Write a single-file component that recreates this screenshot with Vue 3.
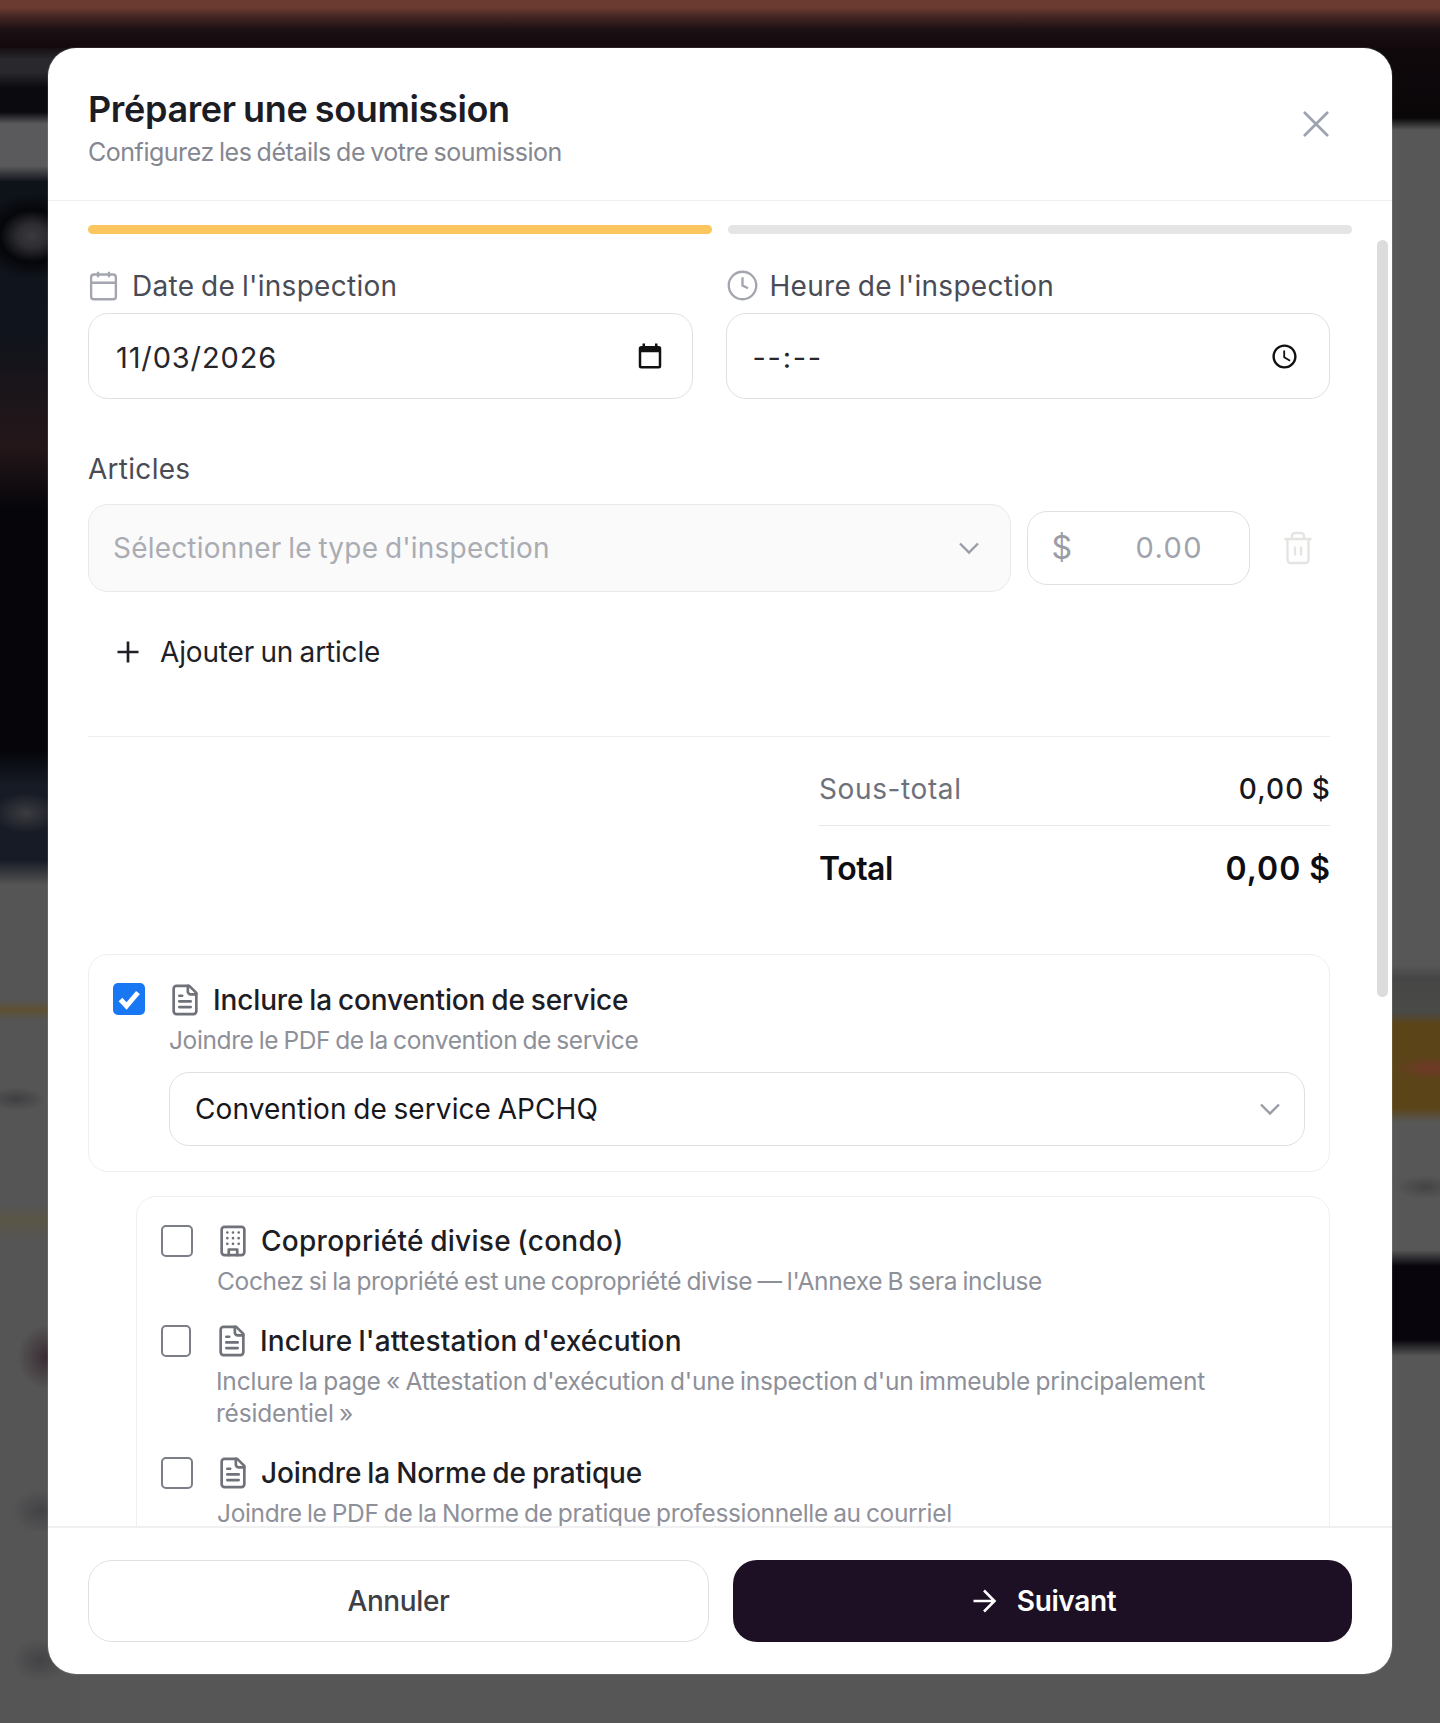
<template>
  <div class="screen">
    <div class="modal">
      <header class="modal-head">
        <div>
          <h2 class="title">Préparer une soumission</h2>
          <p class="subtitle">Configurez les détails de votre soumission</p>
        </div>
        <svg class="close" viewBox="0 0 24 24"><path d="M18 6 6 18M6 6l12 12" /></svg>
      </header>

      <div class="modal-body">
        <div class="scroll-thumb"></div>

        <div class="steps">
          <span class="step active"></span>
          <span class="step"></span>
        </div>

        <div class="content">
          <div class="fields">
            <div>
              <label class="field-label">
                <svg class="label-icon" viewBox="0 0 24 24">
                  <path d="M8 2v4M16 2v4M3 10h18" />
                  <rect x="3" y="4" width="18" height="18" rx="2" />
                </svg>
                Date de l'inspection
              </label>
              <div class="input">
                <span class="date-value">11/03/2026</span>
                <svg class="native-icon cal" viewBox="0 0 24 24">
                  <path d="M19 4h-1V2h-2v2H8V2H6v2H5a2 2 0 0 0-2 2v14a2 2 0 0 0 2 2h14a2 2 0 0 0 2-2V6a2 2 0 0 0-2-2zm0 16H5V9h14v11z" />
                </svg>
              </div>
            </div>
            <div>
              <label class="field-label time">
                <svg class="label-icon" viewBox="0 0 24 24">
                  <circle cx="12" cy="12" r="10" />
                  <path d="M12 6v6l4 2" />
                </svg>
                Heure de l'inspection
              </label>
              <div class="input">
                <span class="time-value">--:--</span>
                <svg class="native-icon clock" viewBox="0 0 24 24">
                  <path d="M11.99 2C6.47 2 2 6.48 2 12s4.47 10 9.99 10C17.52 22 22 17.52 22 12S17.52 2 11.99 2zM12 20c-4.42 0-8-3.58-8-8s3.58-8 8-8 8 3.58 8 8-3.58 8-8 8z" />
                  <path d="M12.5 7H11v6l5.25 3.15.75-1.23-4.5-2.67z" />
                </svg>
              </div>
            </div>
          </div>

          <div class="section-label">Articles</div>
          <div class="article-row">
            <div class="select disabled">
              <span>Sélectionner le type d'inspection</span>
              <svg class="chevron" viewBox="0 0 24 24"><path d="m6 9 6 6 6-6" /></svg>
            </div>
            <div class="price">
              <span class="dollar">$</span>
              <span class="amount">0.00</span>
            </div>
            <svg class="trash" viewBox="0 0 24 24">
              <path d="M3 6h18M19 6v14c0 1-1 2-2 2H7c-1 0-2-1-2-2V6M8 6V4c0-1 1-2 2-2h4c1 0 2 1 2 2v2M10 11v6M14 11v6" />
            </svg>
          </div>

          <div class="add-row">
            <svg class="plus" viewBox="0 0 24 24"><path d="M5 12h14M12 5v14" /></svg>
            Ajouter un article
          </div>

          <div class="divider"></div>

          <div class="summary">
            <div class="summary-line">
              <span class="muted">Sous-total</span>
              <span class="money">0,00 $</span>
            </div>
            <div class="summary-line total">
              <span>Total</span>
              <span class="money">0,00 $</span>
            </div>
          </div>

          <div class="card main-card">
            <div class="option">
              <span class="check on">
                <svg viewBox="0 0 32 32"><path d="M7.5 16.5 13.5 23 25 9.5" /></svg>
              </span>
              <div class="option-text">
                <div class="option-title">
                  <svg class="doc" viewBox="0 0 24 24">
                    <path d="M15 2H6a2 2 0 0 0-2 2v16a2 2 0 0 0 2 2h12a2 2 0 0 0 2-2V7Z" />
                    <path d="M14 2v4a2 2 0 0 0 2 2h4M10 9H8M16 13H8M16 17H8" />
                  </svg>
                  Inclure la convention de service
                </div>
                <p class="option-desc">Joindre le PDF de la convention de service</p>
                <div class="select small">
                  <span>Convention de service APCHQ</span>
                  <svg class="chevron" viewBox="0 0 24 24"><path d="m6 9 6 6 6-6" /></svg>
                </div>
              </div>
            </div>
          </div>

          <div class="card sub-card">
            <div v-for="opt in options" :key="opt.title" class="option" :class="opt.cls">
              <span class="check"></span>
              <div class="option-text">
                <div class="option-title">
                  <svg v-if="opt.icon === 'building'" class="doc" viewBox="0 0 24 24">
                    <rect x="4" y="2" width="16" height="20" rx="2" />
                    <path d="M9 22v-4h6v4M8 6h.01M16 6h.01M12 6h.01M12 10h.01M12 14h.01M16 10h.01M16 14h.01M8 10h.01M8 14h.01" />
                  </svg>
                  <svg v-else class="doc" viewBox="0 0 24 24">
                    <path d="M15 2H6a2 2 0 0 0-2 2v16a2 2 0 0 0 2 2h12a2 2 0 0 0 2-2V7Z" />
                    <path d="M14 2v4a2 2 0 0 0 2 2h4M10 9H8M16 13H8M16 17H8" />
                  </svg>
                  {{ opt.title }}
                </div>
                <p class="option-desc">{{ opt.desc }}</p>
              </div>
            </div>
          </div>
        </div>
      </div>

      <footer class="modal-foot">
        <button class="btn ghost">Annuler</button>
        <button class="btn primary">
          <svg class="arrow" viewBox="0 0 24 24"><path d="M5 12h14M12 5l7 7-7 7" /></svg>
          Suivant
        </button>
      </footer>
    </div>
  </div>
</template>

<script setup>
const options = [
  {
    icon: 'building',
    cls: 'condo',
    title: 'Copropriété divise (condo)',
    desc: "Cochez si la propriété est une copropriété divise — l'Annexe B sera incluse"
  },
  {
    icon: 'doc',
    cls: 'attest',
    title: "Inclure l'attestation d'exécution",
    desc: "Inclure la page « Attestation d'exécution d'une inspection d'un immeuble principalement résidentiel »"
  },
  {
    icon: 'doc',
    cls: 'norme',
    title: 'Joindre la Norme de pratique',
    desc: 'Joindre le PDF de la Norme de pratique professionnelle au courriel'
  }
]
</script>

<style>
body {
  background: #555;
}
</style>

<style scoped>
.screen {
  box-sizing: border-box;
  height: 1723px;
  padding: 48px;
  font-family: Inter, "Liberation Sans", sans-serif;
  word-spacing: -1.3px;
  background-color: #565656;
  background-repeat: no-repeat;
  background-image:
    radial-gradient(ellipse 52px 42px at 32px 236px, #3a3a3e 0, #2d2d31 28%, #05060a 62%, rgba(5, 6, 10, 0) 100%),
    radial-gradient(ellipse 34px 20px at 26px 813px, #3c3c40, rgba(60, 60, 64, 0)),
    radial-gradient(ellipse 30px 12px at 16px 1099px, #3f3f43, rgba(63, 63, 67, 0)),
    radial-gradient(ellipse 28px 32px at 46px 1357px, #3a2c33, rgba(58, 44, 51, 0)),
    radial-gradient(ellipse 28px 22px at 40px 1511px, #434347, rgba(67, 67, 71, 0)),
    radial-gradient(ellipse 28px 22px at 40px 1660px, #434347, rgba(67, 67, 71, 0)),
    radial-gradient(ellipse 34px 12px at 1430px 1068px, #71382a, rgba(113, 56, 42, 0)),
    radial-gradient(ellipse 30px 12px at 1425px 1187px, #444, rgba(68, 68, 68, 0)),
    linear-gradient(to bottom, #6b3a30 0, #6b3a30 8px, #4a2924 15px, #1b0f13 30px, #130a0e 48px),
    linear-gradient(to bottom, #130a0e 0, #130a0e 46px, #2a2a2e 60px, #29282c 72px, #0b0a0f 88px, #0b0a0f 112px, #5a5a5c 124px, #5a5a5c 166px, #0e1219 182px, #10141c 330px, #241619 448px, #05050a 510px, #05050a 750px, #171b25 785px, #171b25 860px, #555 885px, #555 1000px, #5e5032 1010px, #555 1020px, #555 1205px, #5a5545 1220px, #555 1240px),
    linear-gradient(to bottom, #130a0e 0, #0a0709 118px, #575757 130px, #575757 965px, #464646 978px, #4a4a48 1012px, #5c4419 1024px, #5c4419 1108px, #575757 1122px, #575757 1250px, #08060c 1266px, #08060c 1340px, #575757 1356px);
  background-size:
    100% 100%, 100% 100%, 100% 100%, 100% 100%, 100% 100%, 100% 100%, 100% 100%, 100% 100%,
    100% 48px,
    80px 100%,
    80px 100%;
  background-position:
    0 0, 0 0, 0 0, 0 0, 0 0, 0 0, 0 0, 0 0,
    0 0,
    left top,
    right top;
}

.modal {
  height: 1626px;
  display: flex;
  flex-direction: column;
  background: #fff;
  border-radius: 28px;
  overflow: hidden;
  box-shadow: 0 0 0 1px rgba(255, 255, 255, 0.1);
}

.modal-head {
  box-sizing: border-box;
  height: 153px;
  flex-shrink: 0;
  display: flex;
  justify-content: space-between;
  padding: 37px 52px 0 40px;
  border-bottom: 1.5px solid #eeeff1;
}

.title {
  margin: 0;
  font-size: 36px;
  line-height: 48px;
  font-weight: 600;
  letter-spacing: -0.01em;
  color: #1c1c24;
}

.subtitle {
  margin: 2px 0 0;
  font-size: 25px;
  line-height: 34px;
  letter-spacing: -0.019em;
  color: #858790;
}

.close {
  width: 48px;
  height: 48px;
  margin-top: 15px;
  fill: none;
  stroke: #9ca3af;
  stroke-width: 1.35;
}

.modal-body {
  position: relative;
  flex: 1;
  min-height: 0;
  overflow: hidden;
}

.scroll-thumb {
  position: absolute;
  top: 39px;
  right: 4px;
  width: 11px;
  height: 757px;
  border-radius: 6px;
  background: #dcdcdc;
}

.steps {
  display: flex;
  gap: 16px;
  padding: 24px 40px 0;
}

.step {
  flex: 1;
  height: 8.5px;
  border-radius: 5px;
  background: #e5e5e6;
}

.step.active {
  background: #fcc65e;
}

.content {
  padding: 35px 62px 0 40px;
}

.fields {
  display: grid;
  grid-template-columns: 1fr 1fr;
  gap: 33px;
}

.field-label {
  display: flex;
  align-items: center;
  gap: 12px;
  height: 34px;
  margin-left: -1px;
  font-size: 28px;
  letter-spacing: 0.01em;
  color: #4a4c55;
}

.field-label.time {
  margin-left: 0;
  gap: 11px;
}

.label-icon {
  width: 33px;
  height: 33px;
  flex-shrink: 0;
  fill: none;
  stroke: #a3a6ae;
  stroke-width: 1.7;
}

.input {
  box-sizing: border-box;
  height: 86px;
  margin-top: 10px;
  padding: 0 31px 0 26px;
  display: flex;
  align-items: center;
  justify-content: space-between;
  border: 1.5px solid #dfe0e3;
  border-radius: 20px;
}

.date-value {
  margin: 3px 0 0 1px;
  font-size: 29px;
  color: #26262c;
  letter-spacing: 0.03em;
}

.time-value {
  margin-top: 3px;
  font-size: 29px;
  color: #26262c;
  letter-spacing: 0.06em;
}

.native-icon {
  fill: #111;
}

.native-icon.cal {
  width: 30px;
  height: 30px;
  margin-right: -4px;
}

.native-icon.clock {
  width: 29px;
  height: 29px;
  margin-top: 2px;
  margin-right: -1px;
}

.section-label {
  margin-top: 53px;
  height: 34px;
  line-height: 34px;
  font-size: 28px;
  letter-spacing: 0.01em;
  color: #4a4c55;
}

.article-row {
  display: flex;
  align-items: center;
  margin-top: 18px;
}

.select {
  box-sizing: border-box;
  display: flex;
  align-items: center;
  justify-content: space-between;
  font-size: 28px;
}

.select.disabled {
  width: 922.5px;
  height: 88px;
  padding: 0 23px 0 24px;
  letter-spacing: 0.007em;
  color: #aaacb3;
  background: #fafafa;
  border: 1.5px solid #e8e9eb;
  border-radius: 20px;
}

.select.small {
  height: 74px;
  margin-top: 16px;
  padding: 0 16px 0 25px;
  letter-spacing: 0.003em;
  color: #17171c;
  border: 1.5px solid #dfe0e3;
  border-radius: 20px;
}

.chevron {
  width: 36px;
  height: 36px;
  fill: none;
  stroke: #9a9da5;
  stroke-width: 1.6;
}

.price {
  box-sizing: border-box;
  width: 223.5px;
  height: 74px;
  margin-left: 16px;
  padding: 0 46px 0 24px;
  display: flex;
  align-items: center;
  justify-content: space-between;
  font-size: 29px;
  color: #a1a3ac;
  border: 1.5px solid #dfe0e3;
  border-radius: 20px;
}

.dollar {
  font-size: 32px;
  color: #9a9ca6;
}

.amount {
  letter-spacing: 0.05em;
}

.trash {
  width: 36px;
  height: 36px;
  margin-left: 30px;
  fill: none;
  stroke: #e4e4e1;
  stroke-width: 1.6;
}

.add-row {
  display: flex;
  align-items: center;
  gap: 14px;
  height: 34px;
  margin: 43px 0 0 22px;
  font-size: 28px;
  letter-spacing: -0.006em;
  color: #1f1f27;
}

.plus {
  width: 36px;
  height: 36px;
  fill: none;
  stroke: #1f1f26;
  stroke-width: 1.8;
}

.divider {
  height: 1.5px;
  margin-top: 67px;
  background: #eceef0;
}

.summary {
  width: 511px;
  margin: 35px 0 0 auto;
}

.summary-line {
  display: flex;
  justify-content: space-between;
  align-items: center;
  height: 34px;
  padding-bottom: 19px;
  box-sizing: content-box;
  font-size: 28px;
  font-weight: 500;
  color: #17171c;
  border-bottom: 1.5px solid #e8e9eb;
}

.summary-line .muted {
  font-weight: 400;
  letter-spacing: 0.022em;
  color: #6e717b;
}

.money {
  margin-right: -1px;
  letter-spacing: 0.04em;
}

.summary-line.total {
  margin-top: 25px;
  padding-bottom: 0;
  font-size: 32px;
  font-weight: 600;
  letter-spacing: -0.015em;
  color: #0e0e12;
  border-bottom: 0;
}

.summary-line.total .money {
  letter-spacing: 0.032em;
}

.card {
  box-sizing: border-box;
  border: 1.5px solid #eeeff1;
  border-radius: 20px;
}

.main-card {
  margin-top: 69px;
  padding: 28px 24px 25px 24px;
}

.sub-card {
  margin: 24px 0 0 48px;
  padding: 28px 24px 60px;
  display: flex;
  flex-direction: column;
  gap: 28px;
}

.option {
  display: flex;
  gap: 24px;
}

.check {
  box-sizing: border-box;
  flex-shrink: 0;
  width: 32px;
  height: 32px;
  border: 2.5px solid #7b7e86;
  border-radius: 5px;
  background: #fff;
}

.attest .check {
  width: 30px;
  margin-right: 1px;
}

.check.on {
  border: 0;
  background: #1877f2;
}

.check svg {
  display: block;
  width: 32px;
  height: 32px;
  fill: none;
  stroke: #fff;
  stroke-width: 5;
}

.option-text {
  flex: 1;
  min-width: 0;
}

.option-title {
  display: flex;
  align-items: center;
  gap: 11px;
  height: 34px;
  font-size: 28px;
  font-weight: 500;
  letter-spacing: -0.005em;
  color: #1d1d25;
}

.sub-card .option-title {
  margin-top: -1px;
}

.condo .option-title {
  letter-spacing: 0.01em;
}

.attest .option-title {
  letter-spacing: 0.005em;
}

.norme .option-title {
  letter-spacing: -0.0036em;
}

.doc {
  width: 34px;
  height: 34px;
  margin-left: -1px;
  flex-shrink: 0;
  fill: none;
  stroke: #6f7279;
  stroke-width: 1.9;
  stroke-linecap: round;
  stroke-linejoin: round;
}

.option-desc {
  margin: 7px 0 0;
  font-size: 24.5px;
  line-height: 32px;
  letter-spacing: -0.0156em;
  color: #8e9099;
}

.sub-card .option-desc {
  letter-spacing: -0.014em;
}

.sub-card .attest .option-desc {
  letter-spacing: -0.0084em;
}

/* last line sits right on the footer edge */
.sub-card .norme .option-desc {
  margin-top: 11px;
  line-height: 24px;
}

.modal-foot {
  box-sizing: border-box;
  flex-shrink: 0;
  display: flex;
  gap: 24px;
  padding: 32px 40px;
  border-top: 2px solid #f0f0f1;
}

.btn {
  box-sizing: border-box;
  height: 82px;
  padding: 0;
  display: flex;
  align-items: center;
  justify-content: center;
  gap: 15px;
  font-family: inherit;
  letter-spacing: -0.013em;
  font-size: 28px;
  border-radius: 24px;
}

.btn.ghost {
  flex: 0 0 calc(50% - 11px);
  font-weight: 500;
  color: #3e3f46;
  background: #fff;
  border: 1.5px solid #dfe0e3;
}

.btn.primary {
  flex: 0 0 calc(50% - 13px);
  padding-right: 3px;
  font-weight: 600;
  color: #fff;
  background: #1d1025;
  border: 0;
}

.arrow {
  width: 36px;
  height: 36px;
  fill: none;
  stroke: #fff;
  stroke-width: 1.7;
}
</style>
